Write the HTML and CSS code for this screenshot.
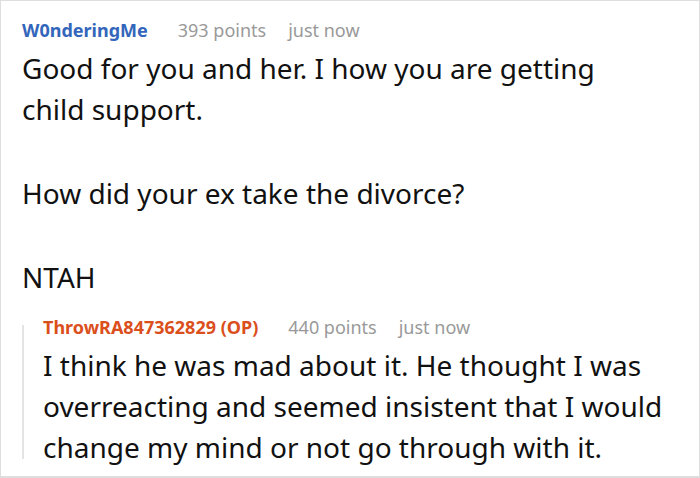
FILE: index.html
```html
<!DOCTYPE html>
<html lang="en">
<head>
<meta charset="utf-8">
<title>Comment thread</title>
<link rel="stylesheet" href="styles.css">
</head>
<body>
<div class="thread">
  <article class="comment">
    <header class="meta">
      <span class="author">W0nderingMe</span>
      <span class="points">393 points</span>
      <span class="time">just now</span>
    </header>
    <div class="body">
      <p>Good for you and her. I how you are getting child support.</p>
      <p>How did your ex take the divorce?</p>
      <p>NTAH</p>
    </div>
    <article class="comment reply">
      <header class="meta">
        <span class="author op">ThrowRA847362829 (OP)</span>
        <span class="points">440 points</span>
        <span class="time">just now</span>
      </header>
      <div class="body">
        <p>I think he was mad about it. He thought I was overreacting and seemed insistent that I would change my mind or not go through with it.</p>
      </div>
    </article>
  </article>
</div>
</body>
</html>
```

FILE: styles.css
```css
html, body {
  margin: 0;
  padding: 0;
  background: #fff;
}

.thread {
  box-sizing: border-box;
  width: 700px;
  height: 478px;
  border: 1px solid #dedede;
  border-bottom-width: 2px;
  overflow: hidden;
  font-family: "Noto Sans", "Open Sans", sans-serif;
  color: #111;
  padding: 14px 0 0 21px;
}

.meta {
  display: flex;
  align-items: baseline;
  font-size: 18px;
  line-height: 30px;
}

.author {
  font-weight: 700;
  color: #3366bb;
  margin-right: 30px;
}

.author.op {
  color: #db4f1c;
}

.points {
  color: #999;
  margin-right: 22px;
}

.time {
  color: #999;
}

.body {
  font-size: 28px;
  line-height: 41px;
  padding-right: 60px;
  margin-top: 3px;
}

.body p {
  margin: 0 0 43px;
}

.body p:last-child {
  margin-bottom: 0;
}

/* nested reply with a thin rule on its left */
.reply {
  position: relative;
  margin-top: 14px;
  padding-left: 21px;
}

.reply::before {
  content: "";
  position: absolute;
  left: 0;
  top: 13px;
  bottom: 9px;
  width: 2px;
  background: #e4e4e4;
}

.reply .body {
  padding-right: 0;
}
```
